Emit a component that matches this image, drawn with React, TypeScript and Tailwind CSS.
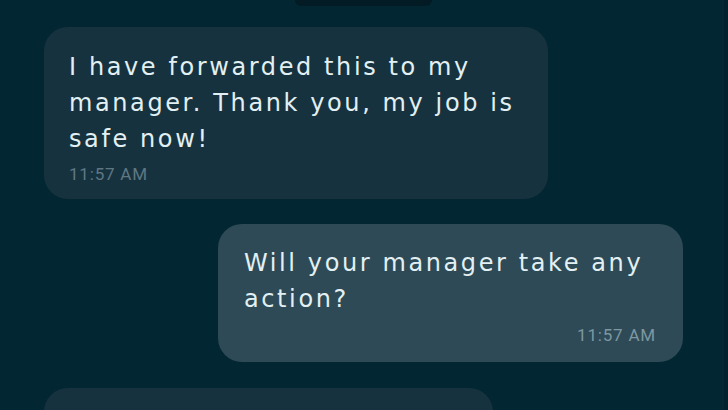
import React from "react";

const body = { fontFamily: '"DejaVu Sans", "Open Sans", sans-serif' };
const time = { fontFamily: 'Roboto, "Liberation Sans", sans-serif' };

export default function App() {
  return (
    <div className="relative w-[728px] h-[410px] overflow-hidden bg-[#032633]">
      <div className="absolute left-[295px] top-0 h-[6px] w-[137px] rounded-b-md bg-[#021b25]" />
      <div className="absolute right-0 top-0 h-full w-[4px] bg-[#02212c]" />
      <div className="flex flex-col pl-[44px]">
        <div className="mt-[27px] w-[504px] h-[172px] rounded-[24px] bg-[#17323f] pl-[25px] pt-[22px]">
          <p style={body} className="text-[24px] leading-[36px] text-[#e2f0f3] tracking-[2.6px] whitespace-nowrap">
            I have forwarded this to my
            <br />
            manager. Thank you, my job is
            <br />
            safe now!
          </p>
          <p style={time} className="mt-[7px] text-[17px] leading-[20px] text-[#5f7783] tracking-[0.8px]">
            11:57 AM
          </p>
        </div>
        <div className="mt-[25px] ml-[174px] w-[465px] h-[138px] rounded-[24px] bg-[#2d4a56] pl-[26px] pr-[27px] pt-[21px]">
          <p style={body} className="text-[24px] leading-[36px] text-[#e2f0f3] tracking-[2.6px] whitespace-nowrap">
            Will your manager take any
            <br />
            action?
          </p>
          <p style={time} className="mt-[8px] text-right text-[17px] leading-[20px] text-[#7e97a1] tracking-[0.8px]">
            11:57 AM
          </p>
        </div>
        <div className="mt-[26px] w-[449px] h-[60px] rounded-[24px] bg-[#17323f]" />
      </div>
    </div>
  );
}
